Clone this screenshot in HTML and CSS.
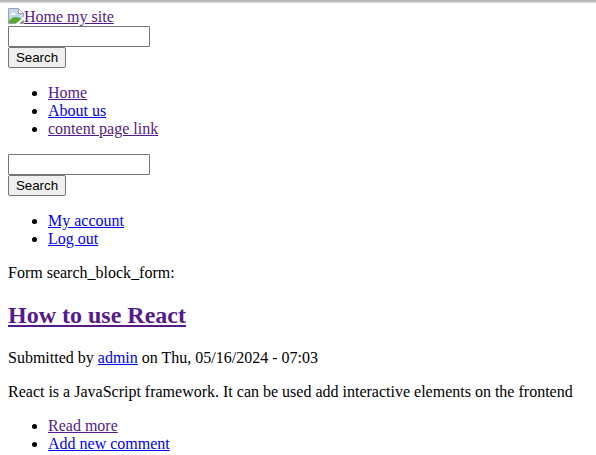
FILE: index.html
```html
<!DOCTYPE html>
<html lang="en">
<head>
<meta charset="utf-8">
<title>Home | my site</title>
<link rel="stylesheet" href="styles.css">
</head>
<body>
<div class="top-shadow"></div>
<header class="branding"><svg class="broken" width="16" height="16" viewBox="0 0 16 16"><path d="M.5.5h10l5 5v10H.5z" fill="#c3d5f5"/><path d="M2.500 7q0-1.500 1.500-1.500Q4.500 4 6 4.500T7.500 7z" fill="#fff"/><path d="M1 15v-2q3-4 7-4 4 0 7 3v3z" fill="#53ab35"/><path d="M.5 15.500V.5h10l5 5v10z" fill="none" stroke="#a3a3a3"/><path d="M10.500.5v5h5z" fill="#fff" stroke="#a3a3a3"/><path d="M7.500 16l8.500-7.500v3L11 16z" fill="#fff"/></svg><a class="visited" href="#">Home my site</a></header>
<form class="search"><input class="field" type="text" aria-label="Search"><button class="submit" type="button">Search</button></form>
<ul class="menu">
<li><a class="visited" href="#">Home</a></li>
<li><a href="#">About us</a></li>
<li><a class="visited" href="#">content page link</a></li>
</ul>
<form class="search"><input class="field" type="text" aria-label="Search"><button class="submit" type="button">Search</button></form>
<ul class="menu">
<li><a href="#">My account</a></li>
<li><a href="#">Log out</a></li>
</ul>
<div class="line">Form search_block_form:</div>
<h2 class="title"><a class="visited" href="#">How to use React</a></h2>
<div class="line">Submitted by <a href="#">admin</a> on Thu, 05/16/2024 - 07:03</div>
<p class="body-text">React is a JavaScript framework. It can be used add interactive elements on the frontend</p>
<ul class="menu">
<li><a class="visited" href="#">Read more</a></li>
<li><a href="#">Add new comment</a></li>
</ul>
</body>
</html>
```
FILE: styles.css
```css
html { overflow: hidden; background: #fff; }
body { margin: 8px; font: 16px/18px "Liberation Serif", "Times New Roman", serif; color: #000; }
a { color: #0000ee; text-decoration: underline; text-decoration-skip-ink: auto; }
.visited { color: #551a8b; }
.top-shadow { position: absolute; top: 0; left: 0; right: 0; height: 4px; background: linear-gradient(#b5b5b5 0 1px, #bdbdbd 1px 2px, #dedede 2px 3px, #f5f5f5 3px); }
.branding { display: flex; height: 18px; white-space: nowrap; }
.broken { flex: none; }
.search { display: flex; flex-direction: column; align-items: flex-start; margin: 0; }
.field { box-sizing: border-box; width: 142px; height: 21px; border: 1px solid #767676; border-radius: 1px; padding: 1px 2px; }
.submit { box-sizing: border-box; width: 58px; height: 21px; border: 1px solid #767676; border-radius: 2px; background: #efefef; padding: 0; font: 13.333px "Liberation Sans", Arial, sans-serif; color: #000; }
.menu { margin: 16px 0; padding-left: 40px; }
.title { margin: 20px 0; font-size: 24px; line-height: 27px; }
.body-text { margin: 16px 0; white-space: nowrap; }
```
